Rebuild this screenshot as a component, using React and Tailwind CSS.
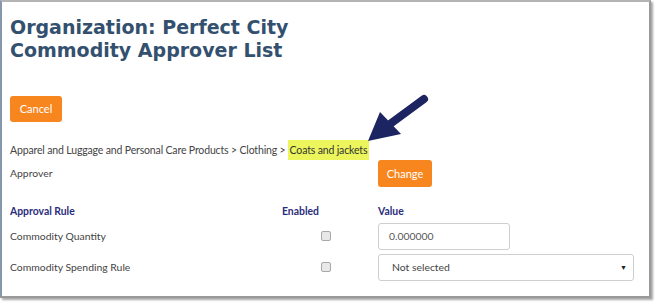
export default function App() {
  const body = { fontFamily: 'Lato, "Open Sans", sans-serif' };
  return (
    <div className="w-[657px] h-[306px] bg-white relative overflow-hidden" style={body}>
      <div className="w-[651px] h-[298px] border-t-2 border-t-[#b4b4b4] border-l-2 border-l-[#8797ab] border-r-2 border-r-[#9a9a9a] border-b-2 border-b-[#9a9a9a] shadow-[2px_2px_2px_rgba(0,0,0,0.35)] flex flex-col pl-[8px] pr-[14px]">
        <h1 className="mt-[14px] text-[19px] leading-[23px] font-bold text-[#34506f]" style={{ fontFamily: '"DejaVu Sans", Verdana, sans-serif' }}>
          Organization: Perfect City<br />Commodity Approver List
        </h1>
        <div className="mt-[33px]">
          <button className="w-[52px] h-[26px] rounded-[3px] bg-[#f7861f] text-white text-[11px]">Cancel</button>
        </div>
        <div className="mt-[18px] text-[10.5px] tracking-[-0.15px] leading-[20px] text-[#444] flex items-center h-[20px]">
          <span>Apparel and Luggage and Personal Care Products &gt; Clothing &gt;</span>
          <span className="bg-[#ecf65c] px-[2px] ml-[2px] text-[#333]">Coats and jackets</span>
        </div>
        <div className="flex items-center h-[27px] text-[10.4px] text-[#444]">
          <span className="w-[368px]">Approver</span>
          <button className="w-[54px] h-[27px] rounded-[3px] bg-[#f7861f] text-white text-[11px]">Change</button>
        </div>
        <div className="mt-[17px] flex items-center text-[10.4px] font-bold text-[#2b2d7c]">
          <span className="w-[272px]">Approval Rule</span>
          <span className="w-[96px]">Enabled</span>
          <span>Value</span>
        </div>
        <div className="mt-[3px] flex items-center h-[27px] text-[10.4px] text-[#444]">
          <span className="w-[311px]">Commodity Quantity</span>
          <span className="w-[10px] h-[10px] border border-[#a8a8a8] bg-[#e8e8e8] rounded-[2px]"></span>
          <span className="w-[47px]"></span>
          <div className="w-[132px] h-[27px] border border-[#cfcfcf] rounded-[3px] flex items-center px-[10px] text-[#555]">0.000000</div>
        </div>
        <div className="mt-[4px] flex items-center h-[27px] text-[10.4px] text-[#444]">
          <span className="w-[311px]">Commodity Spending Rule</span>
          <span className="w-[10px] h-[10px] border border-[#a8a8a8] bg-[#e8e8e8] rounded-[2px]"></span>
          <span className="w-[47px]"></span>
          <div className="w-[256px] h-[27px] border border-[#cfcfcf] rounded-[3px] flex items-center justify-between pl-[13px] pr-[6px] text-[#444]">
            <span>Not selected</span>
            <span className="text-[7px] text-[#222]">▼</span>
          </div>
        </div>
      </div>
      <svg className="absolute left-0 top-0" width="657" height="306" viewBox="0 0 657 306">
        <line x1="424" y1="99" x2="390" y2="124" stroke="#1c2462" strokeWidth="8" strokeLinecap="round" />
        <polygon points="368,141 380,112 401,134" fill="#1c2462" />
      </svg>
    </div>
  );
}
